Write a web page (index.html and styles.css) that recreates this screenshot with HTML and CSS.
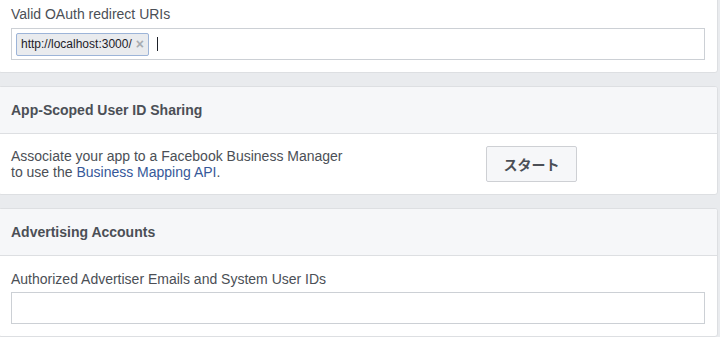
FILE: index.html
```html
<!DOCTYPE html>
<html lang="en">

<head>
    <meta charset="UTF-8">
    <meta name="viewport" content="width=device-width, initial-scale=1.0">
    <title>App Settings</title>
    <link rel="stylesheet" href="styles.css">
</head>

<body>
    <div class="settings">
        <div class="card card-first">
            <div class="field">
                <label>Valid OAuth redirect URIs</label>
                <div class="token-input">
                    <span class="token">http://localhost:3000/<span class="token-x">&times;</span></span>
                    <span class="caret"></span>
                </div>
            </div>
        </div>

        <div class="card">
            <div class="card-header">App-Scoped User ID Sharing</div>
            <div class="card-body split">
                <div class="desc">
                    Associate your app to a Facebook Business Manager<br>
                    to use the <a href="#">Business Mapping API</a>.
                </div>
                <button class="btn">スタート</button>
            </div>
        </div>

        <div class="card">
            <div class="card-header">Advertising Accounts</div>
            <div class="card-body ads">
                <div class="field">
                    <label>Authorized Advertiser Emails and System User IDs</label>
                    <div class="token-input"></div>
                </div>
            </div>
        </div>
    </div>
</body>

</html>
```

FILE: styles.css
```css
body {
    margin: 0;
    background: #e9ebee;
    font-family: "Liberation Sans", Arial, "Noto Sans CJK JP", sans-serif;
    font-size: 14px;
    color: #4b4f56;
}

.settings {
    width: 720px;
    margin-left: -2px;
    margin-top: -8px;
}

.card {
    background: white;
    border: 1px solid #dddfe2;
    border-radius: 3px;
    margin-bottom: 13px;
    overflow: hidden;
}

.card-first .field {
    padding: 12px;
}

.card-header {
    background: #f6f7f9;
    border-bottom: 1px solid #dddfe2;
    padding: 14px 12px;
    font-weight: bold;
    line-height: 18px;
}

.card-body {
    padding: 13px 12px 12px;
}

.field label {
    display: block;
    line-height: 18px;
    margin-bottom: 5px;
}

.ads {
    padding-top: 14px;
}

.ads .field label {
    margin-bottom: 4px;
}

.token-input {
    height: 30px;
    border: 1px solid #ccd0d5;
    padding: 0 4px;
    display: flex;
    align-items: center;
    gap: 8px;
}

.token {
    display: inline-flex;
    align-items: center;
    height: 21px;
    padding: 0 4px;
    background: #e9ebee;
    border: 1px solid #9cb4d8;
    border-radius: 2px;
    font-size: 12px;
    color: #1d2129;
}

.token-x {
    color: #a7abb1;
    font-size: 14px;
    margin-left: 4px;
    font-weight: bold;
}

.caret {
    width: 1px;
    height: 14px;
    background: #1d2129;
}

.split {
    display: grid;
    grid-template-columns: 475px auto;
    align-items: center;
    padding: 12px;
}

.desc {
    line-height: 16px;
}

.desc a {
    color: #365899;
    text-decoration: none;
}

.btn {
    justify-self: start;
    width: 91px;
    height: 36px;
    background: #f6f7f9;
    border: 1px solid #ced0d4;
    border-radius: 2px;
    font-family: inherit;
    font-size: 14px;
    font-weight: bold;
    color: #4b4f56;
}
```
